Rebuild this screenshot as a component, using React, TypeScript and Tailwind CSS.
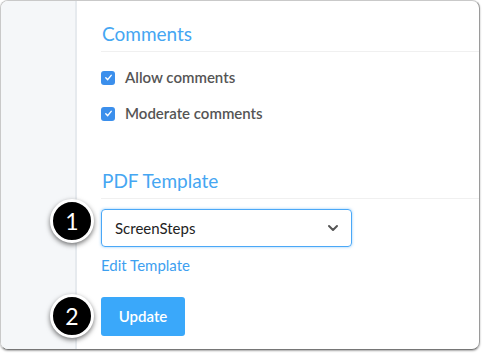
import { ChevronDown } from 'lucide-react';

function Check() {
  return (
    <span className="flex h-[14px] w-[14px] items-center justify-center rounded-[3px] bg-[#3b8fec]">
      <svg viewBox="0 0 10 10" className="h-[9px] w-[9px]" fill="none" stroke="white" strokeWidth="1.6" strokeLinecap="round" strokeLinejoin="round">
        <path d="M2 5.3 4.1 7.4 8 2.6" />
      </svg>
    </span>
  );
}

function Badge({ n, top }: { n: string; top: string }) {
  return (
    <div
      className={`absolute left-[49px] ${top} flex h-[44px] w-[44px] items-center justify-center rounded-full border-[3px] border-white bg-black text-[23px] text-white shadow-[0_2px_5px_rgba(0,0,0,0.55)]`}
    >
      {n}
    </div>
  );
}

export default function App() {
  return (
    <div className="h-[353px] w-[482px] bg-white" style={{ fontFamily: 'Lato, "Open Sans", sans-serif' }}>
      <div className="relative flex h-[350px] w-[480px] overflow-hidden rounded-[8px] border border-[#c9c9c9] border-b-[#767676] border-r-[#9a9a9a] shadow-[0_1px_2px_rgba(0,0,0,0.35)]">
        <div className="w-[76px] shrink-0 border-r-2 border-[#e6eaee] bg-[#f5f7f9]" />
        <div className="flex-1 pl-[24px] pt-[21px]">
          <h2 className="pl-px text-[19px] leading-6 text-[#45a6f2]">Comments</h2>
          <div className="mt-[5px] h-px bg-[#f0f0f0]" />
          <div className="mt-[18px] flex flex-col gap-[21px]">
            <label className="flex h-[15px] items-center gap-[10px] text-[15px] font-semibold text-[#555]">
              <Check />
              Allow comments
            </label>
            <label className="flex h-[15px] items-center gap-[10px] text-[15px] font-semibold text-[#555]">
              <Check />
              Moderate comments
            </label>
          </div>
          <h2 className="mt-[48px] pl-px text-[19px] leading-6 text-[#45a6f2]">PDF Template</h2>
          <div className="mt-[5px] h-px bg-[#f0f0f0]" />
          <div className="mt-[10px] flex h-[38px] w-[251px] items-center justify-between rounded-[4px] border border-[#4aa8f7] pl-[13px] pr-[10px] text-[15px] text-[#222] shadow-[0_0_3px_rgba(74,168,247,0.6)]">
            <span>ScreenSteps</span>
            <ChevronDown className="h-4 w-4 text-[#555]" strokeWidth={3} />
          </div>
          <div className="mt-[8px] text-[15px] leading-5 text-[#3da0f0]">Edit Template</div>
          <button className="mt-[22px] h-[39px] w-[84px] rounded-[3px] bg-[#3aa8fa] text-[15px] font-semibold text-white">
            Update
          </button>
        </div>
        <Badge n="1" top="top-[198px]" />
        <Badge n="2" top="top-[293px]" />
      </div>
    </div>
  );
}
